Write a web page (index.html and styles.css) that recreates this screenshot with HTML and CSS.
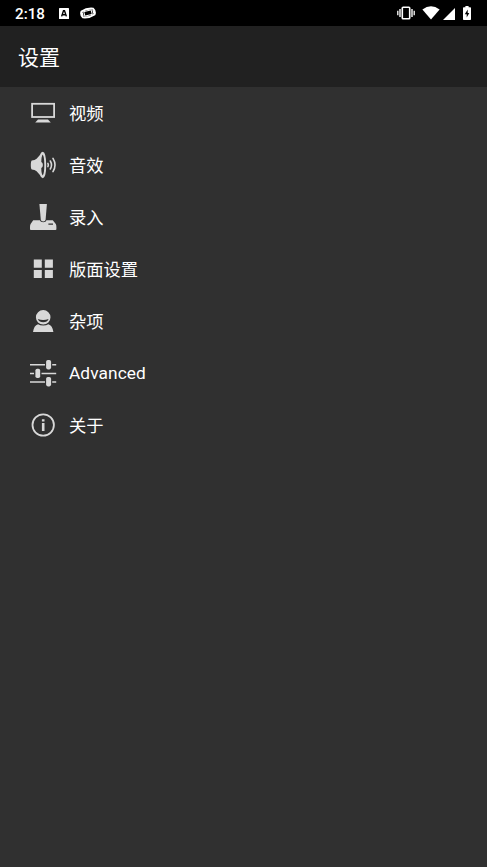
FILE: index.html
```
<!DOCTYPE html>
<html lang="zh-CN">
<head>
<meta charset="utf-8">
<title>设置</title>
<link rel="stylesheet" href="styles.css">
</head>
<body>
<div class="status">
  <span class="clock">2:18</span>
  <svg class="app-icon" width="10" height="11" viewBox="0 0 10 11"><rect width="10" height="11" rx=".6" fill="#fff"/><path d="M2.6 8.4 4.5 2.8H5.5L7.4 8.4M3.4 6.7H6.6" fill="none" stroke="#000" stroke-width="1.4"/></svg>
  <svg class="game-icon" width="18" height="12" viewBox="0 0 18 12"><g transform="rotate(-14 9 6)" fill="none" stroke="#fff"><path d="M3 3Q9 .8 15 3Q17 6 15 9Q9 11.2 3 9Q1 6 3 3Z" stroke-width="1.9"/><rect x="5.2" y="3.7" width="7.6" height="4.6" stroke-width="1"/><path d="M3.4 4V8M14.6 4V8" stroke-width="1.4"/></g></svg>
  <svg class="vibrate" width="18" height="14" viewBox="0 0 18 14"><g fill="none" stroke="#fff"><rect x="5.3" y="1.3" width="7.4" height="11.4" rx=".8" stroke-width="1.6"/><path d="M3 3V11M15 3V11" stroke-width="1.4"/><path d="M.8 4.8V9.2M17.2 4.8V9.2" stroke-width="1.3"/></g></svg>
  <svg class="wifi" width="18" height="14" viewBox="0 0 18 14"><path d="M.4 3.5Q9-2.8 17.6 3.5L9 13.6Z" fill="#fff"/></svg>
  <svg class="signal" width="12" height="12" viewBox="0 0 12 12"><path d="M12 0V12H0Z" fill="#fff"/></svg>
  <svg class="battery" width="8" height="14" viewBox="0 0 8 14"><path d="M2.4 0H5.6V1.3H7.2Q8 1.3 8 2V13.2Q8 14 7.2 14H.8Q0 14 0 13.2V2Q0 1.3.8 1.3H2.4Z" fill="#fff"/><path d="M4.7 3.6 1.8 8.2H3.7V11.6L6.3 6.9H4.7Z" fill="#000"/></svg>
</div>
<header class="bar"><h1>设置</h1></header>
<ul class="menu">
  <li><svg viewBox="0 0 28 28"><rect x="3.1" y="4.8" width="22" height="13.2" fill="none" stroke="#d8d8d8" stroke-width="1.8"/><path d="M9 20.4H19L21.8 23.6H6.2Z"/></svg><span>视频</span></li>
  <li><svg viewBox="0 0 28 28"><path fill-rule="evenodd" d="M2.8 9.4Q5.8 9.2 7.6 7.7L10.9 4Q12 .8 13.8 .8Q17.2 1.5 17.2 14Q17.2 26.5 13.8 27.2Q12 27.2 10.9 24L7.6 20.3Q5.8 18.8 2.8 18.6Q1.8 18 1.8 14Q1.8 10 2.8 9.4ZM13.7 3.5Q12.3 5.5 12.3 11Q13.9 11.6 13.9 14Q13.9 16.4 12.3 17Q12.3 22.5 13.7 24.5Q15.3 22.5 15.3 14Q15.3 5.5 13.7 3.5Z"/><g fill="none" stroke="#d8d8d8" stroke-width="1.6" stroke-linecap="round"><path d="M18.9 12.4Q19.8 14 18.9 15.6"/><path d="M21.3 10Q23.7 14 21.3 18"/><path d="M24 7.4Q28 14 24 20.6"/></g></svg><span>音效</span></li>
  <li><svg viewBox="0 0 28 28"><path d="M10.4 1H17.9L16.6 16.8Q16.4 18.4 14.2 18.4Q12 18.4 11.8 16.8Z"/><path fill-rule="evenodd" d="M4.2 17.2H10.9Q11.3 19.3 14.2 19.3Q17.1 19.3 17.5 17.2H23.8L26.8 21Q27.4 22 27.4 24V26.2Q27.4 27 26.4 27H2Q1 27 1 26.2V24Q1 22 1.6 21ZM19.4 20.6V21.7H24V20.6Z"/></svg><span>录入</span></li>
  <li><svg viewBox="0 0 28 28"><path d="M4.8 4.5H12.8V12.7H4.8ZM15.8 4.5H23.9V12.7H15.8ZM4.8 14.9H12.8V23.1H4.8ZM15.8 14.9H23.9V23.1H15.8Z"/></svg><span>版面设置</span></li>
  <li><svg viewBox="0 0 28 28"><path fill-rule="evenodd" d="M14.2 3A7.3 7.3 0 1 1 14.2 17.6A7.3 7.3 0 1 1 14.2 3ZM8.8 12Q10.2 15.2 14.2 15.2Q18.2 15.2 19.6 12Q14.2 13.8 8.8 12Z"/><path d="M9 17.2Q11 18.6 14.2 18.6Q17.4 18.6 19.4 17.2Q23.5 18.5 24.4 25H4Q4.9 18.5 9 17.2Z"/></svg><span>杂项</span></li>
  <li><svg viewBox="0 0 28 28"><path d="M1 4.9H16V6.4H1ZM23.2 4.9H27.2V6.4H23.2ZM1 13.8H5V15.3H1ZM12.5 13.8H27.2V15.3H12.5ZM1 22.2H16V23.7H1ZM23.2 22.2H27.2V23.7H23.2Z"/><rect x="17.1" y="1" width="5" height="9.4" rx="1.8"/><rect x="6.4" y="9.7" width="4.8" height="9.4" rx="1.8"/><rect x="17.1" y="18" width="5" height="9.4" rx="1.8"/></svg><span class="latin">Advanced</span></li>
  <li><svg viewBox="0 0 28 28"><circle cx="14.2" cy="14" r="10.7" fill="none" stroke="#d8d8d8" stroke-width="1.8"/><path d="M12.9 8.2H15.5V10.6H12.9ZM12.9 12H15.5V20H12.9Z"/></svg><span>关于</span></li>
</ul>
</body>
</html>
```
FILE: styles.css
```
body {
  margin: 0;
  min-height: 867px;
  background: #303030;
  color: #fff;
  font-family: Roboto, "Noto Sans CJK SC", sans-serif;
}
.status {
  display: flex;
  align-items: center;
  box-sizing: border-box;
  height: 26px;
  padding: 0 16px 0 15px;
  background: #000;
}
.status svg {
  flex: none;
}
.clock {
  width: 44px;
  margin-top: 2px;
  font-size: 15.2px;
  line-height: 20px;
  font-weight: 500;
}
.game-icon {
  margin-left: 10px;
}
.vibrate {
  margin-left: auto;
}
.wifi {
  margin-left: 7px;
}
.signal {
  margin: 2px 0 0 3px;
}
.battery {
  margin-left: 8px;
}
.bar {
  display: flex;
  align-items: center;
  box-sizing: border-box;
  height: 61px;
  padding: 2px 0 0 18px;
  background: #212121;
}
.bar h1 {
  margin: 0;
  font-size: 21px;
  line-height: 30px;
  font-weight: 400;
}
.menu {
  margin: 0;
  padding: 0;
  list-style: none;
}
.menu li {
  display: flex;
  align-items: center;
  height: 52px;
  padding-left: 29px;
}
.menu svg {
  width: 28px;
  height: 28px;
  margin-right: 12px;
  fill: #d8d8d8;
}
.menu span {
  padding-top: 2px;
  font-size: 17.3px;
  line-height: 24px;
}
.menu .latin {
  padding-top: 0;
  letter-spacing: 0.1px;
}
```
